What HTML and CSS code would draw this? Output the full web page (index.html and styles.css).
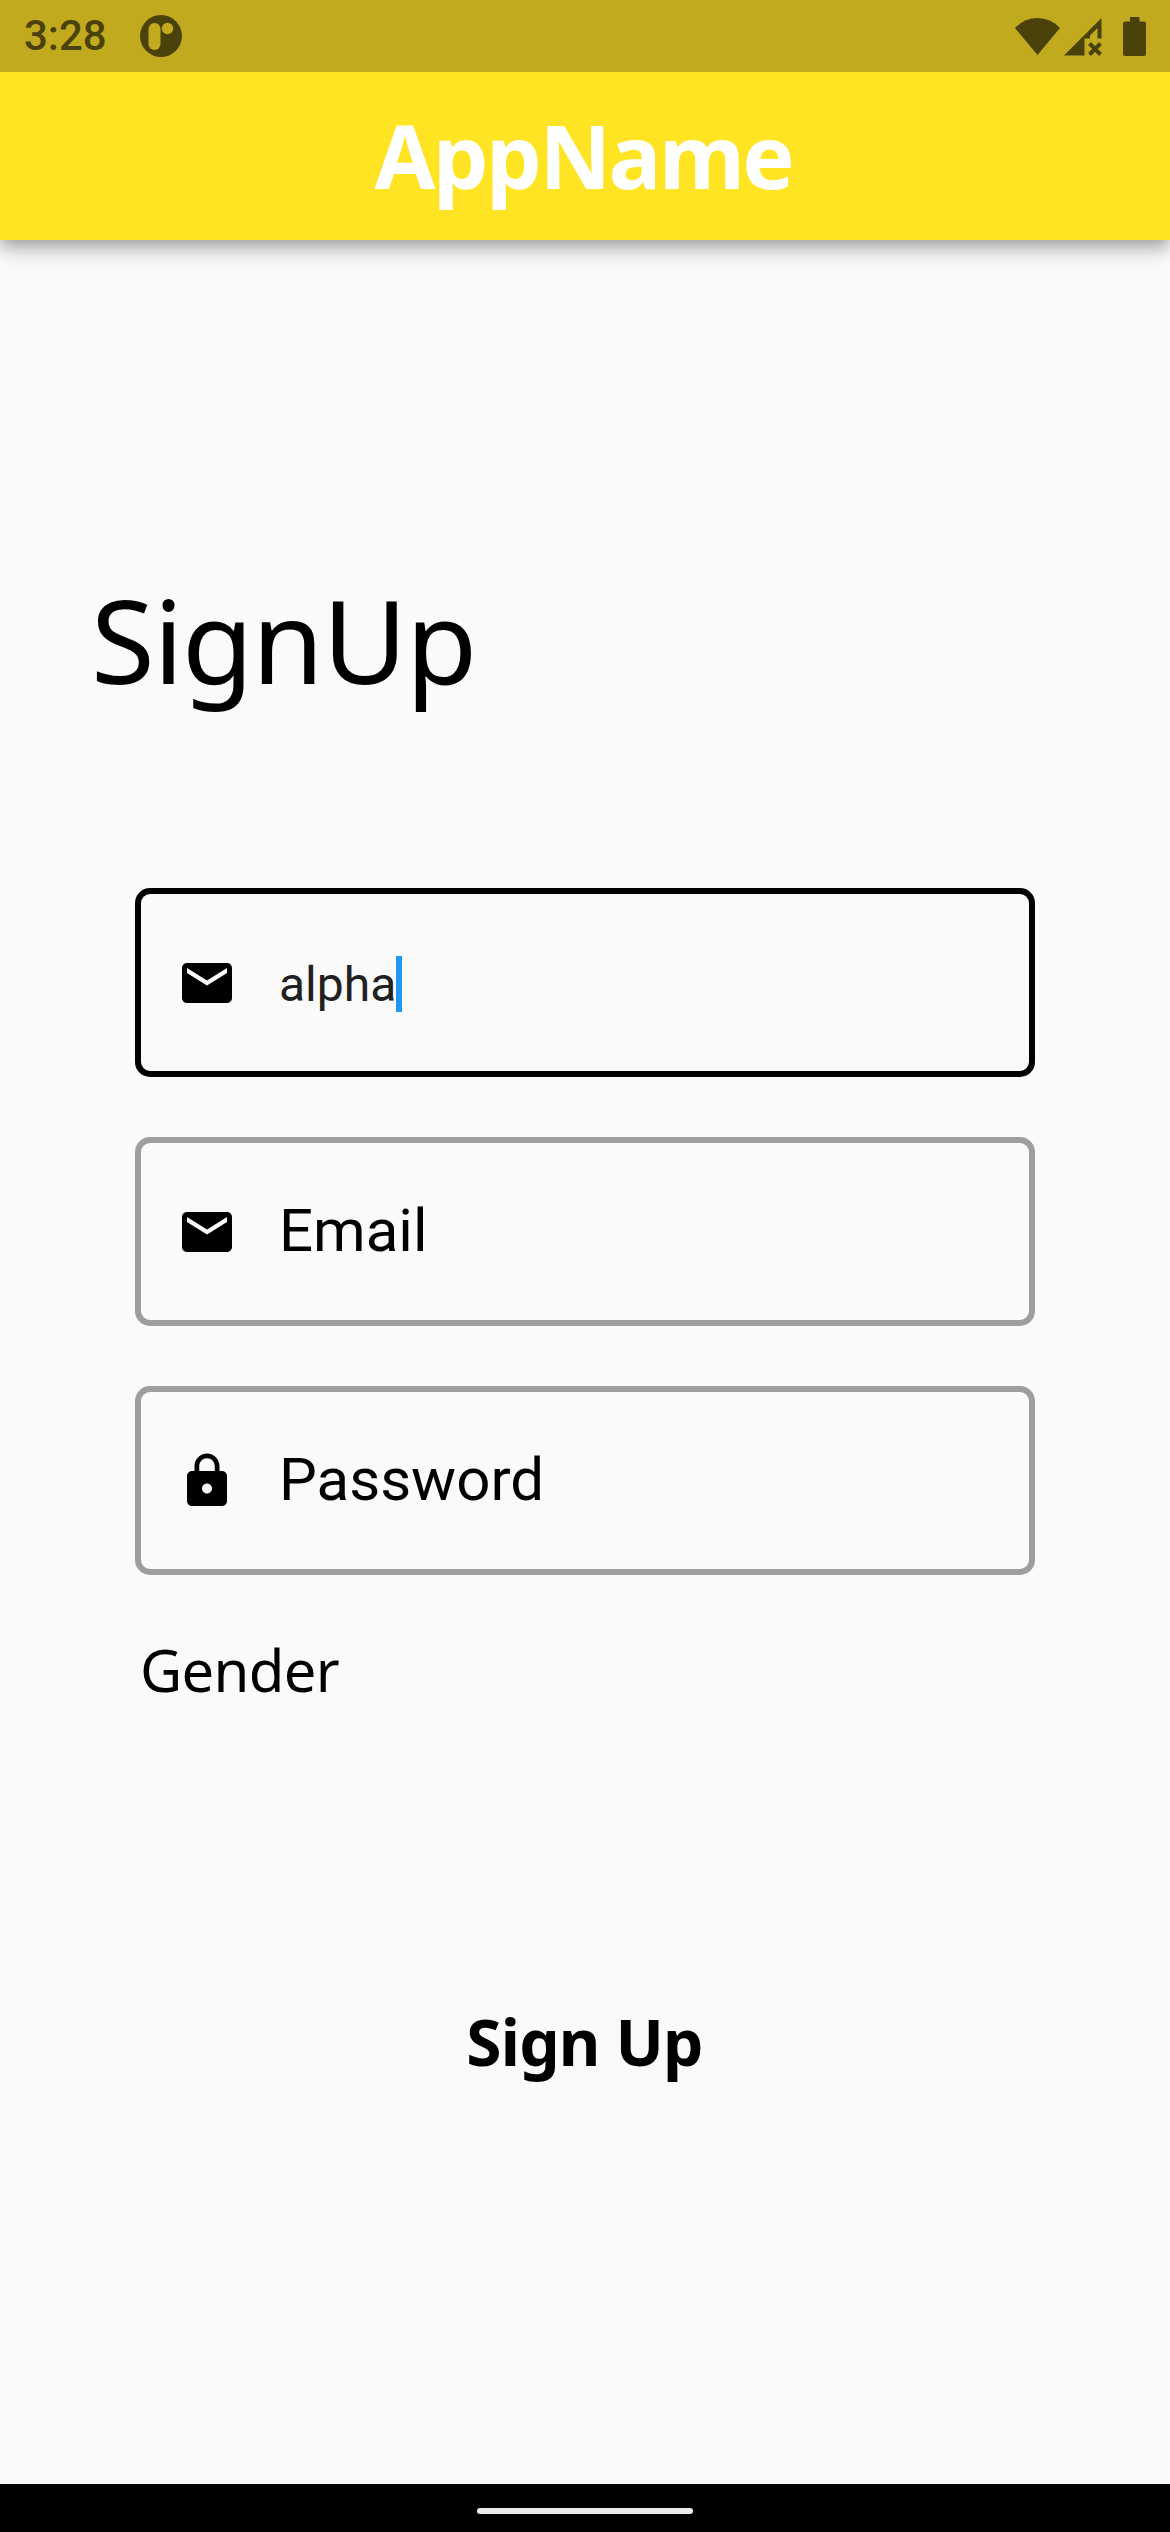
FILE: index.html
```html
<!DOCTYPE html>
<html lang="en">
<head>
<meta charset="utf-8">
<title>AppName – Sign up</title>
<link rel="stylesheet" href="styles.css">
</head>
<body>
<div class="screen">
  <div class="status-bar">
    <span class="clock">3:28</span>
    <svg class="status-app" viewBox="0 0 42 42" width="42" height="42">
      <circle cx="21" cy="21" r="21" fill="#4b420b"/>
      <rect x="8.5" y="8" width="12" height="27" rx="6" fill="#c1aa1d"/>
      <circle cx="27.5" cy="13.5" r="5.7" fill="#c1aa1d"/>
    </svg>
    <svg class="status-icons" viewBox="0 0 131 39" width="131" height="39" fill="#4b420b">
      <path d="M0 11Q9.500 1 22.500 1T45 11L22.500 38Z"/>
      <path fill-rule="evenodd" d="M86.500 1V21.500H82.500V11L75 18.500V21.500H69.500V38.500H49Z"/>
      <path d="M74.500 26.500L85.500 37.500M85.500 26.500L74.500 37.500" stroke="#4b420b" stroke-width="4"/>
      <path d="M108 6.500a2 2 0 0 1 2-2H115V0H124.500V4.500H129a2 2 0 0 1 2 2V37a2 2 0 0 1-2 2H110a2 2 0 0 1-2-2Z"/>
    </svg>
  </div>
  <header class="app-bar"><span class="app-name">AppName</span></header>
  <main class="content">
    <h1 class="title">SignUp</h1>
    <div class="fields">
      <div class="field field-active">
        <svg class="icon" viewBox="0 0 24 24"><path d="M20 4H4c-1.100 0-2 .9-2 2v12c0 1.100.9 2 2 2h16c1.100 0 2-.9 2-2V6c0-1.100-.9-2-2-2zm0 4l-8 5-8-5V6l8 5 8-5v2z"/></svg>
        <span class="value">alpha</span><span class="caret"></span>
      </div>
      <div class="field">
        <svg class="icon" viewBox="0 0 24 24"><path d="M20 4H4c-1.100 0-2 .9-2 2v12c0 1.100.9 2 2 2h16c1.100 0 2-.9 2-2V6c0-1.100-.9-2-2-2zm0 4l-8 5-8-5V6l8 5 8-5v2z"/></svg>
        <span class="hint">Email</span>
      </div>
      <div class="field">
        <svg class="icon" viewBox="0 0 24 24"><path d="M18 8h-1V6c0-2.760-2.240-5-5-5S7 3.240 7 6v2H6c-1.100 0-2 .9-2 2v10c0 1.100.9 2 2 2h12c1.100 0 2-.9 2-2V10c0-1.100-.9-2-2-2zm-6 9c-1.100 0-2-.9-2-2s.9-2 2-2 2 .9 2 2-.9 2-2 2zm3.100-9H8.900V6c0-1.710 1.390-3.100 3.100-3.100 1.710 0 3.100 1.390 3.100 3.100v2z"/></svg>
        <span class="hint">Password</span>
      </div>
    </div>
    <div class="gender">Gender</div>
    <div class="submit">Sign Up</div>
  </main>
  <div class="nav-bar"><span class="nav-pill"></span></div>
</div>
</body>
</html>
```
FILE: styles.css
```css
* { box-sizing: border-box; margin: 0; padding: 0; }
body { background: #fafafa; }
.screen { display: flex; flex-direction: column; width: 1170px; height: 2532px; color: #000; font-family: "Noto Sans", sans-serif; }
.status-bar { position: relative; z-index: 1; display: flex; align-items: center; height: 72px; padding: 0 24px; background: #c1aa1d; }
.clock { width: 116px; color: #4b420b; font: 500 42px/74px Roboto, sans-serif; }
.status-icons { margin-left: auto; }
.app-bar { display: flex; justify-content: center; height: 168px; padding-right: 3px; background: #ffe424; box-shadow: 0 6px 12px -3px rgba(0, 0, 0, 0.2), 0 12px 15px rgba(0, 0, 0, 0.14), 0 3px 30px rgba(0, 0, 0, 0.12); }
.app-name { color: #fff; font-size: 88px; font-weight: 700; line-height: 166px; letter-spacing: -2.4px; }
.content { flex: 1; padding: 329px 135px 0 91px; }
.title { font-size: 116px; font-weight: 400; line-height: 140px; letter-spacing: -1.3px; }
.fields { display: flex; flex-direction: column; gap: 60px; margin: 179px 0 0 44px; }
.field { display: flex; align-items: center; height: 189px; padding-left: 36px; border: 6px solid #9e9e9e; border-radius: 15px; }
.field-active { border-color: #000; }
.icon { width: 60px; height: 60px; margin-right: 42px; }
.value { padding-top: 4px; color: #212121; font: 400 48px/56px Roboto, sans-serif; }
.caret { width: 6px; height: 56px; margin-top: 3px; background: #2196f3; }
.hint { padding-bottom: 2px; font: 400 60px/70px Roboto, sans-serif; }
.gender { margin: 60px 0 0 49px; font-size: 58px; line-height: 70px; letter-spacing: -0.7px; }
.submit { margin: 297px 0 0 43px; font-size: 64px; font-weight: 700; line-height: 80px; letter-spacing: -0.8px; text-align: center; }
.nav-bar { display: flex; align-items: center; justify-content: center; height: 48px; background: #000; }
.nav-pill { width: 216px; height: 6px; margin-top: 6px; border-radius: 3px; background: #ececec; }
```
